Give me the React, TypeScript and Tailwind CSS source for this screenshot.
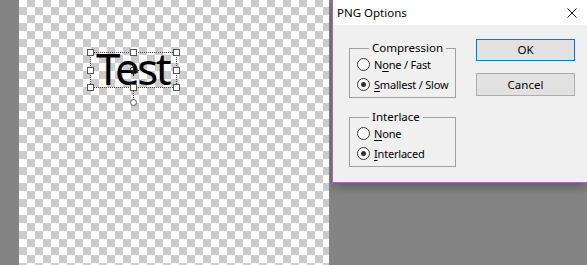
import React from "react";

function Radio({ checked, label, mnemonic }: { checked?: boolean; label: string; mnemonic: number }) {
  return (
    <div className="flex h-[20px] items-center whitespace-nowrap">
      <span className="flex h-[13px] w-[13px] shrink-0 items-center justify-center rounded-full border border-[#333] bg-white">
        {checked && <span className="h-[5px] w-[5px] rounded-full bg-[#333]" />}
      </span>
      <span className="ml-[4px] text-[11px] leading-none tracking-[-0.2px] text-black">
        {label.slice(0, mnemonic)}
        <span className="underline underline-offset-2">{label[mnemonic]}</span>
        {label.slice(mnemonic + 1)}
      </span>
    </div>
  );
}

function GroupBox({ title, children }: { title: string; children: React.ReactNode }) {
  return (
    <fieldset className="w-[107px] border border-[#a0a0a0] pb-[3px] pl-[7px]">
      <legend className="ml-[12px] px-[3px] text-[11.5px] leading-[12px] text-black">{title}</legend>
      {children}
    </fieldset>
  );
}

function Handle({ className }: { className: string }) {
  return <span className={`absolute h-[7px] w-[7px] border border-[#555] bg-white ${className}`} />;
}

export default function App() {
  return (
    <div className="flex h-[265px] w-[587px] overflow-hidden bg-[#848484] font-['Noto_Sans',sans-serif]">
      <div className="w-[19px] shrink-0" />

      {/* transparent canvas */}
      <div className="relative w-[310px] shrink-0 bg-[conic-gradient(#cccccc_25%,#ffffff_0_50%,#cccccc_0_75%,#ffffff_0)] [background-position:0_-1px] [background-size:16px_16px]">
        <div className="absolute left-[71px] top-[52px] h-[36px] w-[87px] border border-dotted border-[#444]">
          <span className="absolute left-[5px] top-[-7px] text-[44px] leading-none tracking-[-2.5px] text-black">Test</span>
          <Handle className="left-[-4px] top-[-4px]" />
          <Handle className="left-[39px] top-[-4px]" />
          <Handle className="right-[-4px] top-[-4px]" />
          <Handle className="left-[-4px] top-[14px]" />
          <Handle className="right-[-4px] top-[14px]" />
          <Handle className="bottom-[-4px] left-[-4px]" />
          <Handle className="bottom-[-4px] left-[39px]" />
          <Handle className="bottom-[-4px] right-[-4px]" />
          <svg className="absolute left-[37px] top-[12px]" width="11" height="11" viewBox="0 0 11 11">
            <circle cx="5.5" cy="5.5" r="3.5" fill="none" stroke="#222" strokeWidth="1" />
            <path d="M5.5 0v11M0 5.5h11" stroke="#222" strokeWidth="1" />
          </svg>
          <span className="absolute left-[42px] top-[38px] h-[9px] border-l border-dotted border-[#444]" />
          <span className="absolute left-[39px] top-[46px] h-[7px] w-[7px] rounded-full border border-[#555] bg-white" />
        </div>
      </div>

      {/* PNG Options dialog */}
      <div className="ml-[3px] flex h-[183px] flex-1 flex-col border-b border-l border-[#b65fd9] bg-[#f0f0f0] shadow-[0_3px_12px_rgba(0,0,0,0.35)]">
        <div className="flex h-[25px] items-center justify-between bg-white pl-[4px] pr-[10px]">
          <span className="text-[11.5px] text-black">PNG Options</span>
          <svg width="10" height="10" viewBox="0 0 10 10">
            <path d="M0.5 0.5l9 9M9.5 0.5l-9 9" stroke="#111" strokeWidth="1" />
          </svg>
        </div>
        <div className="flex pl-[16px] pt-[17px]">
          <div className="flex flex-col gap-[13px]">
            <GroupBox title="Compression">
              <Radio label="None / Fast" mnemonic={1} />
              <Radio label="Smallest / Slow" mnemonic={0} checked />
            </GroupBox>
            <GroupBox title="Interlace">
              <Radio label="None" mnemonic={0} />
              <Radio label="Interlaced" mnemonic={0} checked />
            </GroupBox>
          </div>
          <div className="ml-[20px] mt-[-3px] flex flex-col gap-[12px]">
            <button className="h-[22px] w-[99px] border border-[#0078d7] bg-[#e1e1e1] text-[11.5px] text-black">OK</button>
            <button className="h-[23px] w-[99px] border border-[#adadad] bg-[#e1e1e1] text-[11.5px] text-black">Cancel</button>
          </div>
        </div>
      </div>
    </div>
  );
}
